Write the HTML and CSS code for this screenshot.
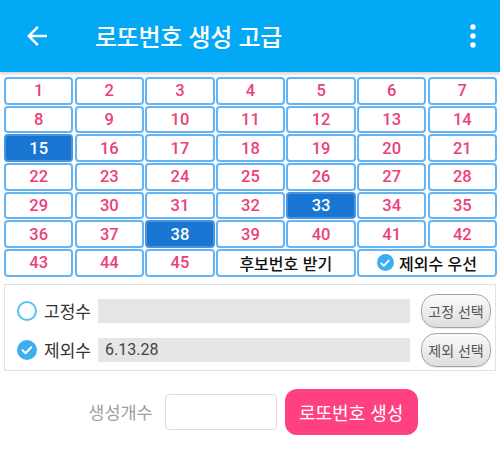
FILE: index.html
```html
<!DOCTYPE html>
<html lang="ko">
<head>
<meta charset="utf-8">
<link rel="stylesheet" href="styles.css">
</head>
<body>
<header class="appbar">
  <svg class="back" viewBox="0 0 24 24" width="30" height="30"><path fill="#fff" d="M20 11H7.83l5.59-5.59L12 4l-8 8 8 8 1.41-1.41L7.83 13H20v-2z"/></svg>
  <h1 class="title">로또번호 생성 고급</h1>
  <svg class="more" viewBox="0 0 12 30" width="12" height="30"><circle cx="6" cy="6" r="2.7" fill="#fff"/><circle cx="6" cy="15" r="2.7" fill="#fff"/><circle cx="6" cy="24" r="2.7" fill="#fff"/></svg>
</header>

<div class="grid">
  <div class="cell">1</div><div class="cell">2</div><div class="cell">3</div><div class="cell">4</div><div class="cell">5</div><div class="cell">6</div><div class="cell">7</div>
  <div class="cell">8</div><div class="cell">9</div><div class="cell">10</div><div class="cell">11</div><div class="cell">12</div><div class="cell">13</div><div class="cell">14</div>
  <div class="cell sel">15</div><div class="cell">16</div><div class="cell">17</div><div class="cell">18</div><div class="cell">19</div><div class="cell">20</div><div class="cell">21</div>
  <div class="cell">22</div><div class="cell">23</div><div class="cell">24</div><div class="cell">25</div><div class="cell">26</div><div class="cell">27</div><div class="cell">28</div>
  <div class="cell">29</div><div class="cell">30</div><div class="cell">31</div><div class="cell">32</div><div class="cell sel">33</div><div class="cell">34</div><div class="cell">35</div>
  <div class="cell">36</div><div class="cell">37</div><div class="cell sel">38</div><div class="cell">39</div><div class="cell">40</div><div class="cell">41</div><div class="cell">42</div>
  <div class="cell">43</div><div class="cell">44</div><div class="cell">45</div>
  <div class="cell wide">후보번호 받기</div>
  <div class="cell wide"><span class="chk"><svg viewBox="0 0 16 16" width="16" height="16"><path d="M4.2 8.3l2.6 2.6 5-5.4" fill="none" stroke="#fff" stroke-width="1.8" stroke-linecap="round" stroke-linejoin="round"/></svg></span>제외수 우선</div>
</div>

<div class="panel">
  <div class="row">
    <span class="radio"></span>
    <span class="lbl">고정수</span>
    <div class="bar"></div>
    <button class="pill">고정 선택</button>
  </div>
  <div class="row">
    <span class="radio on"><svg viewBox="0 0 20 20" width="20" height="20"><path d="M5.6 10.3l3 3 5.6-6" fill="none" stroke="#fff" stroke-width="2" stroke-linecap="round" stroke-linejoin="round"/></svg></span>
    <span class="lbl">제외수</span>
    <div class="bar">6.13.28</div>
    <button class="pill">제외 선택</button>
  </div>
</div>

<div class="gen">
  <span class="gen-lbl">생성개수</span>
  <div class="count"></div>
  <button class="go">로또번호 생성</button>
</div>
</body>
</html>
```

FILE: styles.css
```css
* { box-sizing: border-box; }
html, body { margin: 0; padding: 0; background: #fff; }
body {
  width: 500px;
  height: 450px;
  overflow: hidden;
  font-family: "Noto Sans CJK KR", Roboto, sans-serif;
}

.appbar {
  height: 72px;
  background: #03A9F4;
  display: flex;
  align-items: center;
  box-shadow: 0 2px 3px rgba(0, 0, 0, 0.18);
  position: relative;
  z-index: 1;
}
.back { margin-left: 22px; display: block; }
.title {
  margin: 0 0 0 43px;
  color: #fff;
  font-size: 24px;
  font-weight: 500;
  line-height: 1;
  letter-spacing: -0.3px;
}
.more { margin-left: auto; margin-right: 21px; display: block; }

.grid {
  margin: 5px 3px 0 4px;
  display: grid;
  grid-template-columns: repeat(7, 1fr);
  grid-auto-rows: 27.7px;
  gap: 1px 1.2px;
}
.cell {
  border: 2px solid #64B5F6;
  border-radius: 4px;
  display: flex;
  align-items: center;
  justify-content: center;
  color: #EC407A;
  font-family: Roboto, "Noto Sans CJK KR", sans-serif;
  font-weight: 500;
  font-size: 16.5px;
  background: #fff;
}
.cell.sel {
  background: #1976D2;
  border-color: #4a93dd;
  color: #fff;
}
.cell.wide {
  grid-column: span 2;
  color: #111;
  font-family: "Noto Sans CJK KR", Roboto, sans-serif;
  font-size: 16px;
  font-weight: 500;
}
.chk {
  width: 17px;
  height: 17px;
  border-radius: 50%;
  background: #3FAEF0;
  display: flex;
  align-items: center;
  justify-content: center;
  margin-right: 5px;
}
.chk svg { display: block; }

.panel {
  margin: 7px 4px 0;
  border: 1px solid #E2E2E2;
  padding: 9px 4px 3px 12px;
  display: flex;
  flex-direction: column;
  gap: 5px;
}
.row {
  display: flex;
  align-items: center;
  height: 34px;
}
.radio {
  width: 20px;
  height: 20px;
  border-radius: 50%;
  border: 2.5px solid #4FC3F7;
  display: flex;
  align-items: center;
  justify-content: center;
  flex: none;
}
.radio.on {
  border: none;
  background: #3FAEF0;
}
.radio svg { display: block; }
.lbl {
  margin-left: 7px;
  font-size: 17px;
  color: #333;
  width: 47px;
  white-space: nowrap;
}
.bar {
  margin-left: 7px;
  flex: 1;
  height: 24px;
  background: #E5E5E5;
  padding-left: 7px;
  font-family: Roboto, sans-serif;
  font-size: 16px;
  line-height: 24px;
  color: #444;
}
.pill {
  margin-left: 11px;
  width: 70px;
  height: 34px;
  padding: 0;
  border: 1px solid #A5A5A5;
  border-radius: 15px;
  background: linear-gradient(#fbfbfb, #dedede);
  box-shadow: 0 1px 1px rgba(0, 0, 0, 0.1);
  font-family: "Noto Sans CJK KR", sans-serif;
  font-size: 14px;
  color: #555;
}

.gen {
  margin-top: 18px;
  display: flex;
  align-items: center;
  justify-content: center;
  padding-left: 6px;
}
.gen-lbl {
  font-size: 17.5px;
  color: #9E9E9E;
  margin-right: 12px;
}
.count {
  width: 112px;
  height: 36px;
  border: 1px solid #DDDDDD;
  border-radius: 4px;
}
.go {
  margin-left: 8px;
  width: 133px;
  height: 46px;
  border: none;
  border-radius: 12px;
  background: #FF4081;
  color: #fff;
  font-family: "Noto Sans CJK KR", sans-serif;
  font-size: 18px;
  padding: 0;
}
```
